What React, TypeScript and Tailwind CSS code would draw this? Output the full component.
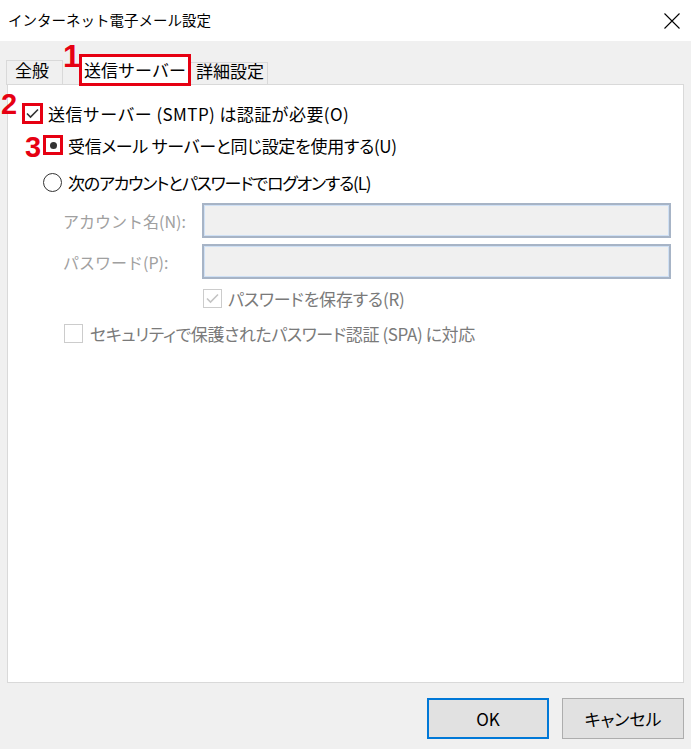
import React from 'react';

const jp = '"Noto Sans CJK JP", "Noto Sans", sans-serif';

function Mark({ n, className }: { n: string; className: string }) {
  return (
    <span
      className={`absolute font-bold leading-none text-[#e60012] ${className}`}
      style={{ fontFamily: '"Liberation Sans", Arial, sans-serif' }}
    >
      {n}
    </span>
  );
}

function CheckIcon({ color }: { color: string }) {
  return (
    <svg width="13" height="11" viewBox="0 0 13 11" fill="none">
      <path d="M1 5.5 L4.5 9 L12 1.5" stroke={color} strokeWidth="1.6" />
    </svg>
  );
}

export default function App() {
  return (
    <div
      className="relative flex h-[749px] w-[691px] flex-col bg-[#f0f0f0] text-black"
      style={{ fontFamily: jp }}
    >
      {/* title bar */}
      <div className="flex h-[41px] items-center justify-between bg-white pl-[8px] pr-[11px]">
        <span className="text-[14.5px] leading-none">インターネット電子メール設定</span>
        <svg width="16" height="16" viewBox="0 0 16 16">
          <path d="M0.5 0.5 L15.5 15.5 M15.5 0.5 L0.5 15.5" stroke="#000" strokeWidth="1.1" />
        </svg>
      </div>

      {/* tabs */}
      <div className="flex h-[43px] items-end pl-[6px]">
        <div className="mb-[-1px] flex h-[25px] w-[57px] items-start border border-b-0 border-[#d9d9d9] pl-[8px] pt-[1px] text-[17px] leading-[16px]">
          全般
        </div>
        <div className="ml-[16px] mb-[-2px] z-10 flex h-[32px] w-[112px] items-center justify-center border-[3px] border-[#e60012] bg-white text-[17px]">
          送信サーバー
        </div>
        <div className="mb-[-1px] flex h-[23px] w-[77px] items-start border border-b-0 border-l-0 border-[#d9d9d9] pl-[5px] text-[17px] leading-[16px]">
          詳細設定
        </div>
      </div>

      {/* panel */}
      <div className="mx-[7px] flex h-[599px] flex-col border border-[#d9d9d9] bg-white text-[17px]">
        <div className="ml-[14px] mt-[18px] flex h-[20px] items-center gap-[5px]">
          <div className="flex h-[21px] w-[21px] items-center justify-center border-[3px] border-[#e60012]">
            <CheckIcon color="#333" />
          </div>
          <span className="whitespace-nowrap leading-none tracking-[0.4px]">送信サーバー (SMTP) は認証が必要(O)</span>
        </div>

        <div className="ml-[35px] mt-[12px] flex h-[20px] items-center gap-[5px]">
          <div className="flex h-[20px] w-[20px] items-center justify-center border-[3px] border-[#e60012]">
            <div className="h-[7px] w-[7px] rounded-full bg-[#333]" />
          </div>
          <span className="whitespace-nowrap leading-none tracking-[-0.3px] [font-feature-settings:'palt']">
            受信メール サーバーと同じ設定を使用する(U)
          </span>
        </div>

        <div className="ml-[35px] mt-[17px] flex h-[20px] items-center gap-[6px]">
          <div className="h-[19px] w-[19px] rounded-full border border-[#333] bg-white" />
          <span className="whitespace-nowrap leading-none tracking-[-1.2px] [font-feature-settings:'palt']">
            次のアカウントとパスワードでログオンする(L)
          </span>
        </div>

        <div className="ml-[55px] mt-[11px] flex h-[35px] items-center">
          <span className="w-[139px] whitespace-nowrap text-[16px] leading-none text-[#a0a0a0]">アカウント名(N):</span>
          <div className="h-[35px] w-[469px] border-2 border-[#a7b4c6] bg-[#f0f0f0] shadow-[inset_0_0_0_1px_#cfe0f4]" />
        </div>

        <div className="ml-[55px] mt-[6px] flex h-[35px] items-center">
          <span className="w-[139px] whitespace-nowrap text-[16px] leading-none text-[#a0a0a0]">パスワード(P):</span>
          <div className="h-[35px] w-[469px] border-2 border-[#a7b4c6] bg-[#f0f0f0] shadow-[inset_0_0_0_1px_#cfe0f4]" />
        </div>

        <div className="ml-[195px] mt-[10px] flex h-[19px] items-center gap-[6px]">
          <div className="flex h-[19px] w-[19px] items-center justify-center border border-[#cccccc]">
            <CheckIcon color="#c4c4c4" />
          </div>
          <span className="whitespace-nowrap leading-none tracking-[-0.2px] text-[#7a7a7a] [font-feature-settings:'palt']">
            パスワードを保存する(R)
          </span>
        </div>

        <div className="ml-[56px] mt-[16px] flex h-[19px] items-center gap-[7px]">
          <div className="h-[19px] w-[19px] border border-[#cccccc] bg-white" />
          <span className="whitespace-nowrap leading-none tracking-[-0.4px] text-[#7a7a7a] [font-feature-settings:'palt']">
            セキュリティで保護されたパスワード認証 (SPA) に対応
          </span>
        </div>
      </div>

      {/* buttons */}
      <div className="mt-[15px] flex justify-end gap-[13px] pr-[7px]">
        <button className="flex h-[41px] w-[122px] items-center justify-center border-2 border-[#0078d7] bg-[#e1e1e1] text-[17px]">
          OK
        </button>
        <button className="flex h-[41px] w-[122px] items-center justify-center border border-[#adadad] bg-[#e1e1e1] text-[17px] [font-feature-settings:'palt']">
          キャンセル
        </button>
      </div>

      <Mark n="1" className="left-[63px] top-[41px] text-[31px]" />
      <Mark n="2" className="left-[1px] top-[90px] text-[29px]" />
      <Mark n="3" className="left-[25px] top-[133px] text-[29px]" />
    </div>
  );
}
